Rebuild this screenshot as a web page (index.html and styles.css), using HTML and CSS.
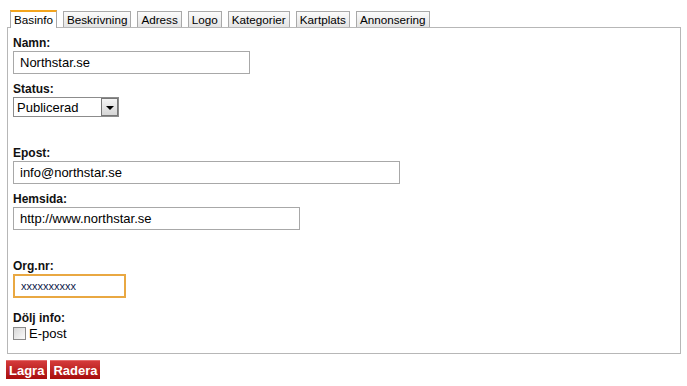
FILE: index.html
```html
<!DOCTYPE html>
<html lang="sv">
<head>
    <meta charset="UTF-8">
    <title>Företag - Basinfo</title>
    <link rel="stylesheet" href="styles.css">
</head>
<body>

    <!-- Tabs -->
    <ul class="tabs">
        <li class="tab active">Basinfo</li>
        <li class="tab">Beskrivning</li>
        <li class="tab">Adress</li>
        <li class="tab">Logo</li>
        <li class="tab">Kategorier</li>
        <li class="tab">Kartplats</li>
        <li class="tab">Annonsering</li>
    </ul>

    <!-- Basinfo panel -->
    <div class="panel">
        <div class="field">
            <label for="namn">Namn:</label>
            <input type="text" id="namn" class="text wide" value="Northstar.se">
        </div>

        <div class="field">
            <label for="status">Status:</label>
            <div class="select-wrap">
                <select id="status">
                    <option selected>Publicerad</option>
                    <option>Opublicerad</option>
                </select>
                <span class="select-arrow"></span>
            </div>
        </div>

        <div class="spacer"></div>

        <div class="field">
            <label for="epost">Epost:</label>
            <input type="text" id="epost" class="text xwide" value="info@northstar.se">
        </div>

        <div class="field">
            <label for="hemsida">Hemsida:</label>
            <input type="text" id="hemsida" class="text mid" value="http://www.northstar.se">
        </div>

        <div class="spacer"></div>

        <div class="field last-input">
            <label for="orgnr">Org.nr:</label>
            <input type="text" id="orgnr" class="text small focus" value="xxxxxxxxxx">
        </div>

        <div class="field">
            <label>Dölj info:</label>
            <div class="check">
                <input type="checkbox" id="dolj-epost">
                <label for="dolj-epost" class="check-label">E-post</label>
            </div>
        </div>
    </div>

    <div class="actions">
        <button class="btn">Lagra</button>
        <button class="btn">Radera</button>
    </div>

</body>
</html>
```

FILE: styles.css
```css
/* Reset */
* {
    margin: 0;
    padding: 0;
    box-sizing: border-box;
}

body {
    font-family: "Liberation Sans", Arial, sans-serif;
    font-size: 12px;
    color: #000;
    background: #fff;
    padding: 10px 6px 0 7px;
}

/* Tabs */
.tabs {
    list-style: none;
    display: flex;
    gap: 6px;
    padding-left: 3px;
    position: relative;
    z-index: 1;
}

.tab {
    height: 16px;
    line-height: 15px;
    padding: 0 3px;
    border: 1px solid #a9a9a9;
    border-bottom: none;
    margin-top: 1px;
    background: linear-gradient(to bottom, #fbfbfb, #e4e4e4);
    font-size: 11.7px;
    cursor: pointer;
}

.tab.active {
    margin-top: 0;
    height: 18px;
    margin-bottom: -1px;
    border-top: 2px solid #f3a51e;
    background: #fff;
}

/* Panel */
.panel {
    border: 1px solid #b7b7b7;
    padding: 8px 5px 10px;
    height: 327px;
}

.field {
    margin-bottom: 8px;
}

.field.last-input {
    margin-bottom: 13px;
}

.field > label {
    display: block;
    font-weight: bold;
    font-size: 12px;
    line-height: 15px;
    color: #111;
}

.spacer {
    height: 21px;
}

/* Text inputs */
.text {
    display: block;
    height: 23px;
    border: 1px solid #a8a8a8;
    padding: 0 6px;
    font-family: "Liberation Sans", Arial, sans-serif;
    font-size: 13px;
    color: #000;
    outline: none;
}

.wide { width: 237px; }
.xwide { width: 387px; }
.mid { width: 287px; }

.small {
    width: 113px;
    height: 24px;
    font-size: 11px;
}

.focus {
    border: 2px solid #e9a842;
    color: #0d1a4a;
}

/* Select */
.select-wrap {
    position: relative;
    width: 106px;
    height: 20px;
}

.select-wrap select {
    appearance: none;
    -webkit-appearance: none;
    width: 100%;
    height: 100%;
    border: 1px solid #8c8c8c;
    background: #fff;
    padding: 0 3px;
    font-family: "Liberation Sans", Arial, sans-serif;
    font-size: 13px;
    color: #000;
    outline: none;
}

.select-arrow {
    position: absolute;
    top: 1px;
    right: 1px;
    width: 17px;
    height: 18px;
    border: 1px solid #777;
    background: linear-gradient(to bottom, #f4f4f4, #d6d6d6);
    pointer-events: none;
}

.select-arrow::after {
    content: "";
    position: absolute;
    left: 4px;
    top: 7px;
    border-left: 4px solid transparent;
    border-right: 4px solid transparent;
    border-top: 4px solid #000;
}

/* Checkbox */
.check {
    display: flex;
    align-items: center;
    gap: 3px;
}

.check input {
    appearance: none;
    -webkit-appearance: none;
    width: 13px;
    height: 13px;
    border: 1px solid #8a8a8a;
    background: linear-gradient(to bottom right, #d8d8d8, #fbfbfb);
}

.check-label {
    font-size: 13px;
    line-height: 15px;
}

/* Buttons */
.actions {
    display: flex;
    gap: 3px;
    padding-top: 6px;
    margin-left: -1px;
}

.btn {
    height: 19px;
    padding: 0 3px;
    border: none;
    border-top: 1px solid #e46a6a;
    background: linear-gradient(to bottom, #d43a3a, #a80d0d);
    color: #fff;
    font-family: "Liberation Sans", Arial, sans-serif;
    font-size: 13px;
    font-weight: bold;
    cursor: pointer;
}
```
